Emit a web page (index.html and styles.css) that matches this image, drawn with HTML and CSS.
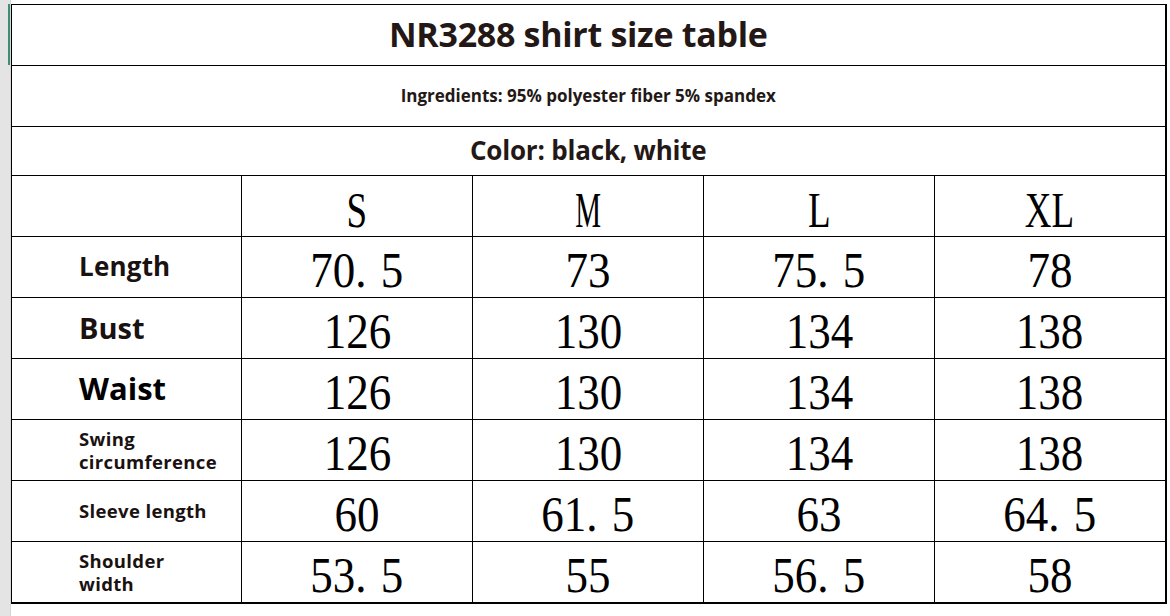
FILE: index.html
```html
<!DOCTYPE html>
<html lang="en">
<head>
<meta charset="utf-8">
<title>NR3288 shirt size table</title>
<link rel="stylesheet" href="styles.css">
</head>
<body>
<div class="sheet">
  <div class="row-headers"><div class="active-mark"></div></div>
  <div class="main">
    <table class="size-table">
      <colgroup>
        <col class="c-label"><col class="c-size"><col class="c-size"><col class="c-size"><col class="c-size">
      </colgroup>
      <tr class="r-title"><td colspan="5" class="title">NR3288 shirt size table</td></tr>
      <tr class="r-std"><td colspan="5" class="ingredients">Ingredients: 95% polyester fiber 5% spandex</td></tr>
      <tr class="r-color"><td colspan="5" class="color">Color: black, white</td></tr>
      <tr class="r-std">
        <td></td>
        <td class="size"><span class="g">S</span></td>
        <td class="size"><span class="g g-m">M</span></td>
        <td class="size"><span class="g">L</span></td>
        <td class="size"><span class="g">XL</span></td>
      </tr>
      <tr class="r-std">
        <td class="label l-md">Length</td>
        <td class="num"><span class="n">70<span class="dot">.</span>5</span></td>
        <td class="num"><span class="n">73</span></td>
        <td class="num"><span class="n">75<span class="dot">.</span>5</span></td>
        <td class="num"><span class="n">78</span></td>
      </tr>
      <tr class="r-std">
        <td class="label l-lg">Bust</td>
        <td class="num"><span class="n">126</span></td>
        <td class="num"><span class="n">130</span></td>
        <td class="num"><span class="n">134</span></td>
        <td class="num"><span class="n">138</span></td>
      </tr>
      <tr class="r-std">
        <td class="label l-xl">Waist</td>
        <td class="num"><span class="n">126</span></td>
        <td class="num"><span class="n">130</span></td>
        <td class="num"><span class="n">134</span></td>
        <td class="num"><span class="n">138</span></td>
      </tr>
      <tr class="r-std">
        <td class="label l-sm"><span class="ln">Swing</span><span class="ln">circumference</span></td>
        <td class="num"><span class="n">126</span></td>
        <td class="num"><span class="n">130</span></td>
        <td class="num"><span class="n">134</span></td>
        <td class="num"><span class="n">138</span></td>
      </tr>
      <tr class="r-std">
        <td class="label l-sm">Sleeve length</td>
        <td class="num"><span class="n">60</span></td>
        <td class="num"><span class="n">61<span class="dot">.</span>5</span></td>
        <td class="num"><span class="n">63</span></td>
        <td class="num"><span class="n">64<span class="dot">.</span>5</span></td>
      </tr>
      <tr class="r-std">
        <td class="label l-sm"><span class="ln">Shoulder</span><span class="ln">width</span></td>
        <td class="num"><span class="n">53<span class="dot">.</span>5</span></td>
        <td class="num"><span class="n">55</span></td>
        <td class="num"><span class="n">56<span class="dot">.</span>5</span></td>
        <td class="num"><span class="n">58</span></td>
      </tr>
    </table>
  </div>
</div>
</body>
</html>
```

FILE: styles.css
```css
* { box-sizing: border-box; }

html, body {
  margin: 0;
  padding: 0;
  background: #ffffff;
}

body {
  width: 1170px;
  height: 616px;
  overflow: hidden;
  font-family: "Open Sans", "Liberation Sans", sans-serif;
  color: #231815;
}

.sheet {
  display: flex;
  height: 616px;
}

.row-headers {
  width: 11px;
  flex: 0 0 11px;
  background: #e4e4e4;
  border-right: 1px solid #d6d6d6;
  display: flex;
  flex-direction: column;
  align-items: flex-end;
  padding-top: 4px;
}

.active-mark {
  width: 2px;
  height: 61px;
  background: #3f8f70;
}

.main {
  padding-top: 4px;
}

.size-table {
  border-collapse: collapse;
  table-layout: fixed;
  width: 1155px;
}

.c-label { width: 230px; }
.c-size { width: 231px; }

.size-table td {
  border: 1px solid #000;
  padding: 0;
  vertical-align: middle;
  text-align: center;
  white-space: nowrap;
}

.size-table td:last-child { border-right-width: 2px; }
.size-table tr:last-child td { border-bottom-width: 2px; }

.r-std td { height: 61px; }
.r-title td { height: 61px; }
.r-color td { height: 49px; }

.title {
  font-size: 34px;
  font-weight: 700;
  letter-spacing: -0.3px;
  padding-right: 20px !important;
  padding-bottom: 3px !important;
}

.ingredients {
  font-size: 17px;
  font-weight: 700;
  padding-bottom: 2px !important;
}

.color {
  font-size: 26px;
  font-weight: 700;
  letter-spacing: -0.2px;
  padding-bottom: 2px !important;
}

.label {
  text-align: left !important;
  padding-left: 67px !important;
  font-weight: 700;
  color: #1a1111;
}

.l-md { font-size: 26px; letter-spacing: 0.2px; padding-bottom: 2px !important; }
.l-lg { font-size: 29px; padding-bottom: 2px !important; }
.l-xl { font-size: 31px; color: #000; padding-bottom: 2px !important; }
.l-sm { font-size: 18.5px; line-height: 24px; letter-spacing: 0.35px; }

.ln { display: block; height: 23px; }

.size, .num {
  font-family: "Liberation Serif", "Times New Roman", serif;
  color: #000;
  font-weight: 400;
}

.g {
  display: inline-block;
  font-size: 50px;
  line-height: 52px;
  transform: scaleX(0.74);
  padding-top: 7px;
}

.g-m { transform: scaleX(0.58); }

.n {
  display: inline-block;
  font-size: 50px;
  line-height: 52px;
  transform: scaleX(0.9);
  padding-top: 6px;
}

.dot {
  margin-right: 16px;
}
```
